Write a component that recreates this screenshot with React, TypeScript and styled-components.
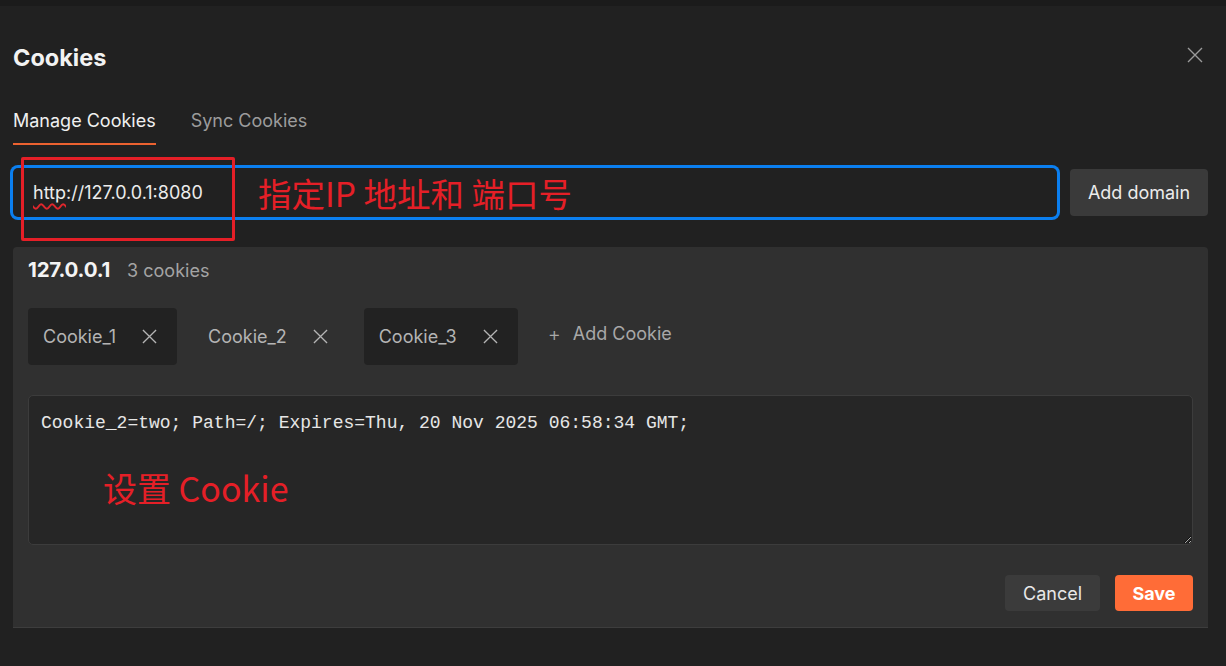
import React from "react";
import styled, { createGlobalStyle } from "styled-components";

const GlobalStyle = createGlobalStyle`
  html, body {
    margin: 0;
    padding: 0;
    background: #212121;
    color-scheme: dark;
  }
  body {
    font-family: Inter, "Noto Sans", "Noto Sans CJK SC", sans-serif;
    color: #e6e6e6;
  }
`;

const cookies = ["Cookie_1", "Cookie_2", "Cookie_3"];
const activeCookie = "Cookie_2";

const CloseIcon = ({ size = 16 }: { size?: number }) => (
  <svg width={size} height={size} viewBox="0 0 16 16" fill="none">
    <path d="M1 1L15 15M15 1L1 15" stroke="currentColor" strokeWidth="1.4" />
  </svg>
);

export default function App() {
  return (
    <>
      <GlobalStyle />
      <TopStrip />
      <Page>
        <Header>
          <Title>Cookies</Title>
          <CloseButton>
            <CloseIcon />
          </CloseButton>
        </Header>

        <Tabs>
          <Tab $active>Manage Cookies</Tab>
          <Tab>Sync Cookies</Tab>
        </Tabs>

        <InputRow>
          <Field>
            <Misspelled>http</Misspelled>://127.0.0.1:8080
          </Field>
          <AddDomain>Add domain</AddDomain>
          <MarkBox />
          <MarkText>指定IP 地址和 端口号</MarkText>
        </InputRow>

        <Panel>
          <DomainRow>
            <Domain>127.0.0.1</Domain>
            <Count>3 cookies</Count>
          </DomainRow>

          <ChipRow>
            {cookies.map((name) => (
              <Chip key={name} $active={name === activeCookie}>
                {name}
                <ChipClose>
                  <CloseIcon size={15} />
                </ChipClose>
              </Chip>
            ))}
            <AddCookie>
              <span>+</span>Add Cookie
            </AddCookie>
          </ChipRow>

          <EditorWrap>
            <Editor
              readOnly
              spellCheck={false}
              defaultValue="Cookie_2=two; Path=/; Expires=Thu, 20 Nov 2025 06:58:34 GMT;"
            />
            <EditorNote>设置 Cookie</EditorNote>
          </EditorWrap>

          <Actions>
            <CancelButton>Cancel</CancelButton>
            <SaveButton>Save</SaveButton>
          </Actions>
        </Panel>
      </Page>
    </>
  );
}

//******** Styles ********//

const TopStrip = styled.div`
  height: 6px;
  background: #1b1b1b;
`;

const Page = styled.div`
  padding: 0 18px 0 13px;
`;

const Header = styled.div`
  margin-top: 28px;
  height: 46px;
  display: flex;
  align-items: center;
  justify-content: space-between;
`;

const Title = styled.h1`
  margin: 0;
  font-size: 23.5px;
  font-weight: 700;
  color: #f2f2f2;
`;

const CloseButton = styled.div`
  display: flex;
  margin: -4px 5px 0 0;
  color: #9a9a9a;
`;

const Tabs = styled.div`
  margin-top: 28px;
  display: flex;
  gap: 35px;
`;

const Tab = styled.div<{ $active?: boolean }>`
  font-size: 18px;
  line-height: 25px;
  padding-bottom: 10px;
  border-bottom: 2px solid ${(p) => (p.$active ? "#ec6230" : "transparent")};
  color: ${(p) => (p.$active ? "#f0f0f0" : "#9c9c9c")};
`;

const InputRow = styled.div`
  position: relative;
  margin-top: 23px;
  height: 49px;
  display: flex;
  align-items: center;
  gap: 13px;
`;

const Field = styled.div`
  flex: 1;
  height: 49px;
  box-sizing: border-box;
  display: flex;
  align-items: center;
  padding-left: 20px;
  background: #212121;
  border-radius: 5px;
  box-shadow: 0 0 0 3px #0b7ff0;
  font-size: 18px;
  color: #ececec;
`;

const Misspelled = styled.span`
  text-decoration: underline wavy #e0262c;
  text-decoration-thickness: 1.5px;
  text-underline-offset: 4px;
`;

const AddDomain = styled.button`
  height: 47px;
  width: 138px;
  border: 0;
  border-radius: 4px;
  background: #3a3a3a;
  color: #ececec;
  font-family: inherit;
  font-size: 18px;
`;

const MarkBox = styled.div`
  position: absolute;
  left: 8px;
  top: -11px;
  width: 214px;
  height: 84px;
  box-sizing: border-box;
  border: 3px solid #e51f27;
  border-radius: 2px;
`;

const MarkText = styled.div`
  position: absolute;
  left: 245px;
  top: 50%;
  transform: translateY(-52%);
  font-family: "Noto Sans CJK SC", sans-serif;
  font-size: 33.5px;
  color: #e51f27;
`;

const Panel = styled.div`
  margin-top: 30px;
  padding: 11px 15px 16px;
  background: #303030;
  border-radius: 4px 4px 0 0;
  border-bottom: 1px solid #3d3d3d;
`;

const DomainRow = styled.div`
  display: flex;
  align-items: baseline;
  gap: 17px;
  line-height: 24px;
`;

const Domain = styled.span`
  font-size: 20.5px;
  font-weight: 700;
  color: #f4f4f4;
  letter-spacing: -0.2px;
`;

const Count = styled.span`
  font-size: 18px;
  color: #a4a4a4;
`;

const ChipRow = styled.div`
  margin-top: 25px;
  display: flex;
  align-items: center;
  gap: 16px;
`;

const Chip = styled.div<{ $active?: boolean }>`
  height: 57px;
  box-sizing: border-box;
  display: flex;
  align-items: center;
  gap: 26px;
  padding: 0 20px 0 15px;
  border-radius: 4px;
  background: ${(p) => (p.$active ? "transparent" : "#222222")};
  font-size: 18px;
  color: #b4b4b4;
`;

const ChipClose = styled.span`
  display: flex;
  color: #b4b4b4;
`;

const AddCookie = styled.div`
  display: flex;
  align-items: center;
  gap: 12px;
  padding: 0 0 6px 14px;
  font-size: 18px;
  color: #a8a8a8;

  span {
    font-size: 20px;
    font-weight: 300;
  }
`;

const EditorWrap = styled.div`
  position: relative;
  margin-top: 30px;
  height: 150px;
`;

const Editor = styled.textarea`
  width: 100%;
  height: 100%;
  box-sizing: border-box;
  margin: 0;
  padding: 16px 12px;
  background: #262626;
  border: 1px solid #3c3c3c;
  border-radius: 5px;
  outline: none;
  font-family: "Liberation Mono", "DejaVu Sans Mono", monospace;
  font-size: 18px;
  line-height: 22px;
  color: #e6e6e6;
  resize: vertical;
  display: block;
`;

const EditorNote = styled.div`
  position: absolute;
  left: 75px;
  top: 68px;
  font-family: "Noto Sans CJK SC", sans-serif;
  font-size: 34px;
  color: #e51f27;
`;

const Actions = styled.div`
  margin-top: 30px;
  display: flex;
  justify-content: flex-end;
  gap: 15px;
`;

const CancelButton = styled.button`
  height: 36px;
  width: 95px;
  border: 0;
  border-radius: 4px;
  background: #3b3b3b;
  color: #e8e8e8;
  font-family: inherit;
  font-size: 18px;
`;

const SaveButton = styled(CancelButton)`
  width: 78px;
  background: #ff6c37;
  color: #ffffff;
  font-weight: 700;
`;
